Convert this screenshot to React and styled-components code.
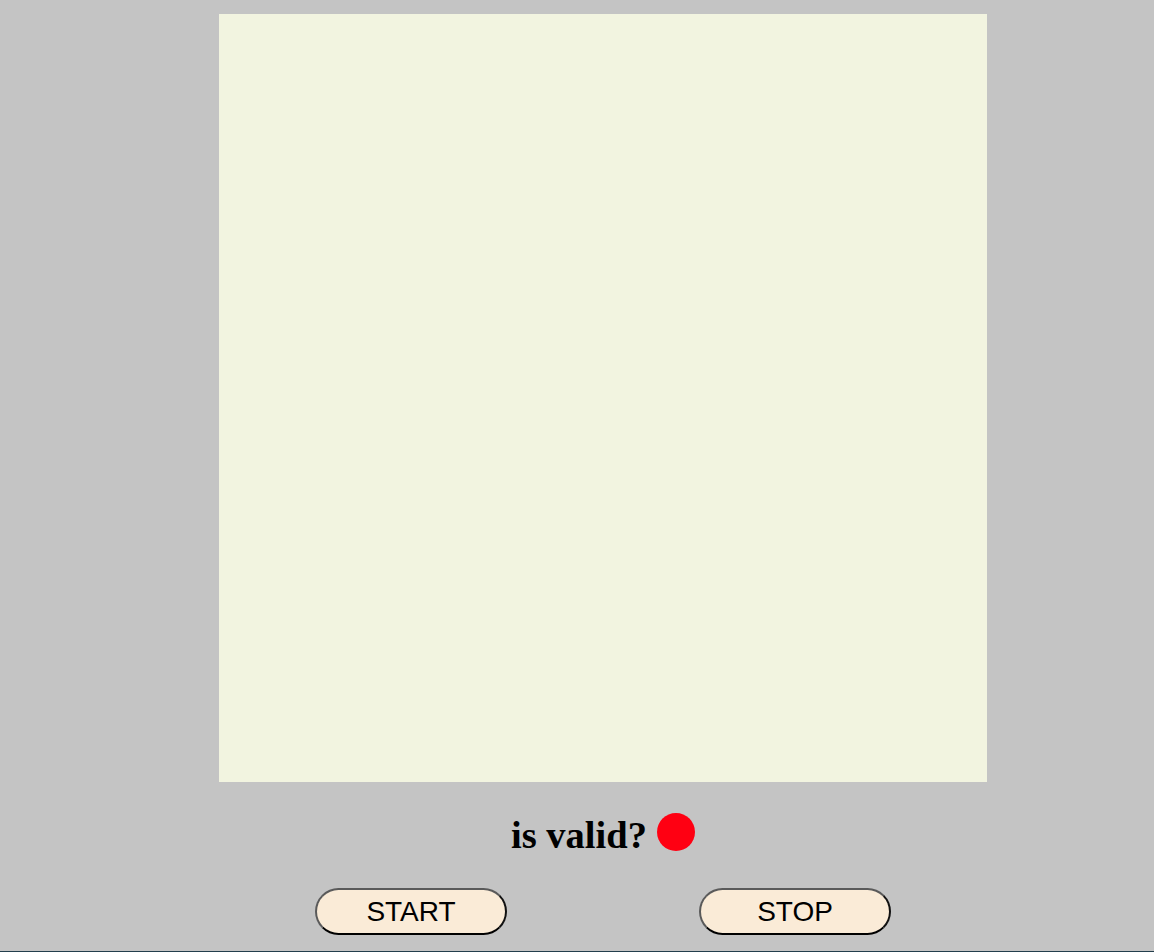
import React from "react";
import styled, { createGlobalStyle } from "styled-components";

const GlobalStyle = createGlobalStyle`
  html, body {
    margin: 0;
    padding: 0;
    background: #c4c4c4;
  }
`;

const Page = styled.div`
  box-sizing: border-box;
  min-height: 952px;
  padding: 14px 0 0 52px;
  display: flex;
  flex-direction: column;
  align-items: center;
  border-bottom: 1px solid #233e4c;
`;

const Board = styled.div`
  width: 768px;
  height: 768px;
  background: #f2f4e0;
`;

const Status = styled.div`
  display: flex;
  align-items: flex-start;
  gap: 10px;
  height: 38px;
  margin-top: 31px;
`;

const Label = styled.span`
  font-family: "Liberation Serif", "Times New Roman", serif;
  font-weight: bold;
  font-size: 38.5px;
  line-height: 38px;
  margin-top: 3px;
  color: #000;
`;

const Light = styled.span`
  width: 38px;
  height: 38px;
  border-radius: 50%;
  background: ${(p) => (p.$on ? "#1ad01a" : "#ff0012")};
`;

const Controls = styled.div`
  display: flex;
  gap: 192px;
  margin-top: 37px;
`;

const Button = styled.button`
  box-sizing: border-box;
  width: 192px;
  height: 47px;
  padding: 0;
  border-radius: 24px;
  border: 2px solid;
  border-color: #5a5a5a #111 #000 #5a5a5a;
  background: #faebd7;
  color: #000;
  font-family: "Liberation Sans", Arial, sans-serif;
  font-size: 28px;
  cursor: pointer;
`;

export default function App() {
  return (
    <>
      <GlobalStyle />
      <Page>
        <Board />
        <Status>
          <Label>is valid?</Label>
          <Light $on={false} />
        </Status>
        <Controls>
          <Button>START</Button>
          <Button>STOP</Button>
        </Controls>
      </Page>
    </>
  );
}
